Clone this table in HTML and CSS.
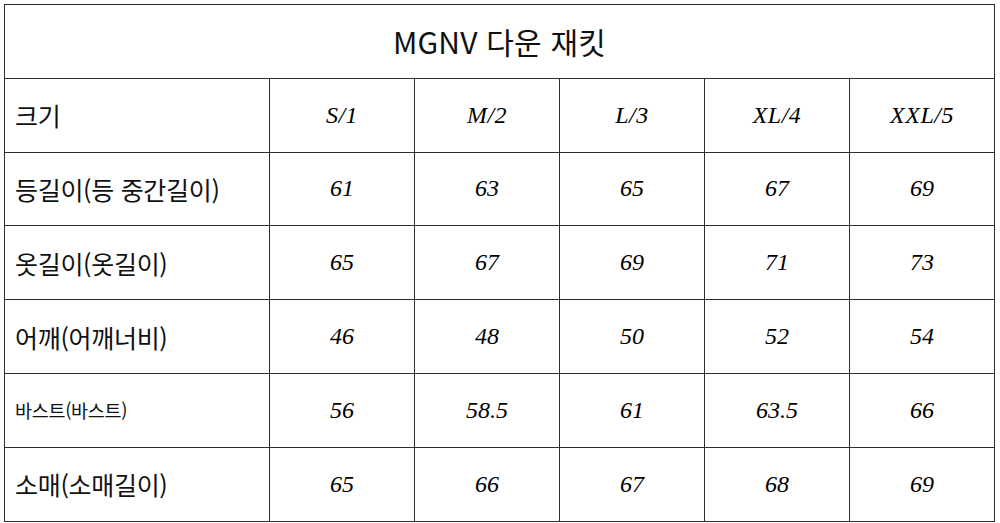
FILE: index.html
```html
<!DOCTYPE html>
<html lang="ko">
<head>
<meta charset="utf-8">
<title>MGNV 다운 재킷</title>
<link rel="stylesheet" href="styles.css">
</head>
<body>
<table class="size-table">
  <colgroup>
    <col class="col-label">
    <col class="col-size"><col class="col-size"><col class="col-size"><col class="col-size"><col class="col-size">
  </colgroup>
  <tr><th class="title" colspan="6">MGNV 다운 재킷</th></tr>
  <tr><td class="label">크기</td><td class="size">S/1</td><td class="size">M/2</td><td class="size">L/3</td><td class="size">XL/4</td><td class="size">XXL/5</td></tr>
  <tr><td class="label">등길이(등 중간길이)</td><td class="num">61</td><td class="num">63</td><td class="num">65</td><td class="num">67</td><td class="num">69</td></tr>
  <tr><td class="label">옷길이(옷길이)</td><td class="num">65</td><td class="num">67</td><td class="num">69</td><td class="num">71</td><td class="num">73</td></tr>
  <tr><td class="label">어깨(어깨너비)</td><td class="num">46</td><td class="num">48</td><td class="num">50</td><td class="num">52</td><td class="num">54</td></tr>
  <tr><td class="label small">바스트(바스트)</td><td class="num">56</td><td class="num">58.5</td><td class="num">61</td><td class="num">63.5</td><td class="num">66</td></tr>
  <tr><td class="label">소매(소매길이)</td><td class="num">65</td><td class="num">66</td><td class="num">67</td><td class="num">68</td><td class="num">69</td></tr>
</table>
</body>
</html>
```
FILE: styles.css
```css
html, body {
  margin: 0;
  padding: 0;
  background: #ffffff;
}
body {
  padding: 4px 0 0 4px;
}
.size-table {
  border-collapse: collapse;
  width: 990px;
  table-layout: fixed;
  color: #111111;
}
.col-label { width: 265px; }
.col-size { width: 145px; }
.size-table th,
.size-table td {
  border: 1px solid #2e2e2e;
  height: 72.8px;
  padding: 0;
  vertical-align: middle;
}
.title {
  font-family: "Noto Sans CJK KR", "Noto Sans", sans-serif;
  font-weight: 400;
  font-size: 30px;
  text-align: center;
  letter-spacing: 0.2px;
}
.label {
  font-family: "Noto Sans CJK KR", "Noto Sans", sans-serif;
  font-weight: 400;
  font-size: 25px;
  padding-left: 10px !important;
  text-align: left;
  letter-spacing: -0.3px;
}
.label.small {
  font-size: 18.5px;
}
.size,
.num {
  font-family: "Liberation Serif", "Times New Roman", serif;
  font-style: italic;
  font-size: 24px;
  text-align: center;
  color: #000000;
}
.size {
  letter-spacing: 0.5px;
}
```
